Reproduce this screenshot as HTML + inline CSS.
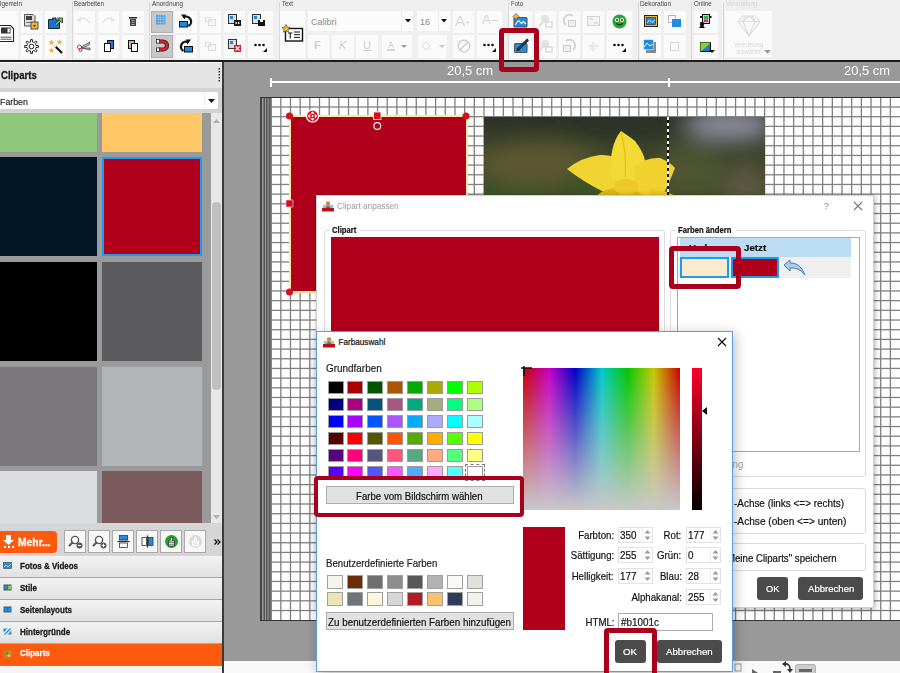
<!DOCTYPE html>
<html><head><meta charset="utf-8">
<style>
*{box-sizing:border-box;margin:0;padding:0}
html,body{width:900px;height:673px;overflow:hidden;background:#f0f0f0;font-family:"Liberation Sans",sans-serif;position:relative}
.a{position:absolute}
svg{position:absolute;overflow:visible}

.glbl{position:absolute;top:0px;font-size:8px;color:#444;line-height:10px;white-space:nowrap}
.sep{position:absolute;top:2px;width:1px;height:58px;background:#d9d9d9}
.btn{position:absolute;background:#fafafa}
.chk{background:#c8c8c8;border:1px solid #b0b0b0}
.t{position:absolute;white-space:nowrap;line-height:1}

</style></head><body>
<div class="a" style="left:0;top:0;width:900px;height:60px;background:#efefef"></div>
<div class="a" style="left:0;top:60px;width:900px;height:2px;background:#1c1c1c"></div>
<div class="a" style="left:0;top:62px;width:222px;height:611px;background:#e8e8e8"></div>
<div class="a" style="left:222px;top:62px;width:2px;height:611px;background:#3a3a3a"></div>
<div class="a" style="left:224px;top:62px;width:676px;height:599px;background:#999999"></div>
<div class="a" style="left:224px;top:661px;width:676px;height:12px;background:#f9f9f9"></div>
<div class="t" style="right:878.2px;transform-origin:100% 0;top:0.81px;font-size:6.6px;color:#444;font-weight:normal;transform:scaleX(0.950);">Allgemein</div>
<div class="t" style="left:74.4px;transform-origin:0 0;top:0.81px;font-size:6.6px;color:#444;font-weight:normal;transform:scaleX(0.940);">Bearbeiten</div>
<div class="t" style="left:151.8px;transform-origin:0 0;top:0.81px;font-size:6.6px;color:#444;font-weight:normal;transform:scaleX(0.960);">Anordnung</div>
<div class="t" style="left:281.6px;transform-origin:0 0;top:0.81px;font-size:6.6px;color:#444;font-weight:normal;transform:scaleX(0.909);">Text</div>
<div class="t" style="left:510.7px;transform-origin:0 0;top:0.81px;font-size:6.6px;color:#444;font-weight:normal;transform:scaleX(0.909);">Foto</div>
<div class="t" style="left:640px;transform-origin:0 0;top:0.81px;font-size:6.6px;color:#444;font-weight:normal;transform:scaleX(0.971);">Dekoration</div>
<div class="t" style="left:694px;transform-origin:0 0;top:0.81px;font-size:6.6px;color:#444;font-weight:normal;transform:scaleX(0.928);">Online</div>
<div class="t" style="left:726px;transform-origin:0 0;top:0.81px;font-size:6.6px;color:#d4d4d4;font-weight:normal;transform:scaleX(0.937);">Veredelung</div>
<div class="sep" style="left:72px"></div>
<div class="sep" style="left:149px"></div>
<div class="sep" style="left:279px"></div>
<div class="sep" style="left:508px"></div>
<div class="sep" style="left:638px"></div>
<div class="sep" style="left:691px"></div>
<div class="sep" style="left:723px"></div>
<div class="btn" style="position:absolute;left:0px;top:11px;width:18px;height:47px"></div>
<div class="btn" style="position:absolute;left:21px;top:11px;width:21px;height:22px"></div>
<div class="btn" style="position:absolute;left:45px;top:11px;width:21px;height:22px"></div>
<div class="btn" style="position:absolute;left:21px;top:35px;width:21px;height:23px"></div>
<div class="btn" style="position:absolute;left:45px;top:35px;width:21px;height:23px"></div>
<svg style="left:0px;top:24px" width="15" height="19" viewBox="0 0 15 19"><path d="M-3 1.5H10.5L13.5 4.5V17.5H-3Z" fill="#fff" stroke="#222" stroke-width="1.1"/><rect x="1" y="3.5" width="9.5" height="6" fill="#333"/><rect x="7.5" y="4.5" width="2.2" height="4" fill="#fff"/><rect x="0.5" y="12.5" width="11" height="1.4" fill="#888"/><rect x="0.5" y="14.6" width="11" height="1.4" fill="#888"/></svg>
<svg style="left:24px;top:14px" width="16" height="16" viewBox="0 0 16 16"><path d="M0.5 0.5H9L11 2.5V12H0.5Z" fill="#ddd" stroke="#555"/><rect x="2" y="2" width="6" height="4" fill="#444"/><rect x="2" y="8" width="7" height="1" fill="#777"/><rect x="7" y="8" width="7" height="7" fill="#f3b43b" stroke="#333" stroke-width=".8"/><path d="M9 11h3l-1.5 2z" fill="#333"/></svg>
<svg style="left:47px;top:16px" width="16" height="14" viewBox="0 0 16 14"><path d="M1.5 3.5H5.5V2H9V4H12.5V12.5H1.5Z" fill="#1f6fc9" stroke="#0d2a4a" stroke-width="1"/><path d="M9 8.5L14 3.5" stroke="#0d2a4a" stroke-width="3"/><path d="M9 8.5L14 3.5" stroke="#8bd12b" stroke-width="1.6"/><path d="M10.5 2H15.5V7Z" fill="#8bd12b" stroke="#0d2a4a" stroke-width=".8"/></svg>
<svg style="left:24px;top:39px" width="15" height="15" viewBox="0 0 15 15"><path d="M11.99 6.50 L14.45 6.66 L14.45 8.34 L11.99 8.50 L11.75 9.26 L11.38 9.96 L13.01 11.82 L11.82 13.01 L9.96 11.38 L9.26 11.75 L8.50 11.99 L8.34 14.45 L6.66 14.45 L6.50 11.99 L5.74 11.75 L5.04 11.38 L3.18 13.01 L1.99 11.82 L3.62 9.96 L3.25 9.26 L3.01 8.50 L0.55 8.34 L0.55 6.66 L3.01 6.50 L3.25 5.74 L3.62 5.04 L1.99 3.18 L3.18 1.99 L5.04 3.62 L5.74 3.25 L6.50 3.01 L6.66 0.55 L8.34 0.55 L8.50 3.01 L9.26 3.25 L9.96 3.62 L11.82 1.99 L13.01 3.18 L11.38 5.04 L11.75 5.74Z" fill="#fff" stroke="#222" stroke-width="1" stroke-linejoin="round"/><circle cx="7.5" cy="7.5" r="2.3" fill="#fff" stroke="#222" stroke-width="1"/></svg>
<svg style="left:48px;top:39px" width="16" height="16" viewBox="0 0 16 16"><path d="M3.50 0.50 L4.29 2.41 L6.35 2.57 L4.78 3.92 L5.26 5.93 L3.50 4.85 L1.74 5.93 L2.22 3.92 L0.65 2.57 L2.71 2.41Z" fill="#f0b41c"/><path d="M11.50 0.00 L12.29 1.91 L14.35 2.07 L12.78 3.42 L13.26 5.43 L11.50 4.35 L9.74 5.43 L10.22 3.42 L8.65 2.07 L10.71 1.91Z" fill="#f0b41c"/><path d="M3.50 8.50 L4.29 10.41 L6.35 10.57 L4.78 11.92 L5.26 13.93 L3.50 12.85 L1.74 13.93 L2.22 11.92 L0.65 10.57 L2.71 10.41Z" fill="#f0b41c"/><path d="M7 7L14 14" stroke="#111" stroke-width="2.2"/><path d="M6.5 6.5L8 8" stroke="#fff" stroke-width="1.2"/></svg>
<div class="btn" style="position:absolute;left:74px;top:11px;width:21px;height:22px"></div>
<div class="btn" style="position:absolute;left:74px;top:35px;width:21px;height:23px"></div>
<div class="btn" style="position:absolute;left:98px;top:11px;width:21px;height:22px"></div>
<div class="btn" style="position:absolute;left:98px;top:35px;width:21px;height:23px"></div>
<div class="btn" style="position:absolute;left:122px;top:11px;width:22px;height:22px"></div>
<div class="btn" style="position:absolute;left:122px;top:35px;width:22px;height:23px"></div>
<svg style="left:77px;top:16px" width="14" height="9" viewBox="0 0 14 9"><path d="M1 4Q7 -1 13 7" stroke="#e4e4e4" stroke-width="1.5" fill="none"/><path d="M0 4L4 1V7Z" fill="#e4e4e4"/></svg>
<svg style="left:101px;top:16px" width="14" height="9" viewBox="0 0 14 9"><path d="M13 4Q7 -1 1 7" stroke="#e4e4e4" stroke-width="1.5" fill="none"/><path d="M14 4L10 1V7Z" fill="#e4e4e4"/></svg>
<svg style="left:129px;top:16px" width="8" height="10" viewBox="0 0 8 10"><rect x="0" y="1" width="8" height="1.5" fill="#222"/><rect x="1" y="3" width="6" height="7" fill="#444"/><rect x="2.5" y="4" width="3" height="1" fill="#aaa"/><rect x="2.5" y="6" width="3" height="1" fill="#aaa"/><rect x="2.5" y="8" width="3" height="1" fill="#aaa"/></svg>
<svg style="left:77px;top:41px" width="14" height="10" viewBox="0 0 14 10"><circle cx="2.5" cy="6" r="2" fill="none" stroke="#d9262c" stroke-width="1"/><circle cx="3.5" cy="9" r="1.5" fill="none" stroke="#d9262c"/><path d="M4 6L13 1L12 4L5 7ZM5 7L13 9L13 7Z" fill="#ccc" stroke="#333" stroke-width=".7"/></svg>
<svg style="left:104px;top:40px" width="10" height="12" viewBox="0 0 10 12"><rect x="3.5" y="0.5" width="6" height="8" fill="#1e7ad6" stroke="#111"/><rect x="0.5" y="3.5" width="6" height="8" fill="#fff" stroke="#111"/></svg>
<svg style="left:128px;top:40px" width="10" height="12" viewBox="0 0 10 12"><rect x="0.5" y="0.5" width="6" height="8" fill="#c8b49a" stroke="#111"/><rect x="3.5" y="3.5" width="6" height="8" fill="#fff" stroke="#111"/></svg>
<div class="btn chk" style="position:absolute;left:151px;top:11px;width:22px;height:22px"></div>
<div class="btn chk" style="position:absolute;left:151px;top:35px;width:22px;height:23px"></div>
<div class="btn" style="position:absolute;left:175px;top:11px;width:22px;height:22px"></div>
<div class="btn" style="position:absolute;left:175px;top:35px;width:22px;height:23px"></div>
<div class="btn" style="position:absolute;left:200px;top:11px;width:21px;height:22px"></div>
<div class="btn" style="position:absolute;left:200px;top:35px;width:21px;height:23px"></div>
<div class="btn" style="position:absolute;left:224px;top:11px;width:21px;height:22px"></div>
<div class="btn" style="position:absolute;left:224px;top:35px;width:21px;height:23px"></div>
<div class="btn" style="position:absolute;left:248px;top:11px;width:25px;height:22px"></div>
<div class="btn" style="position:absolute;left:248px;top:35px;width:25px;height:23px"></div>
<svg style="left:156px;top:15px" width="10" height="10" viewBox="0 0 10 10"><rect x="0.0" y="0.0" width="2" height="2" fill="#3fa3e6"/><rect x="0.0" y="2.5" width="2" height="2" fill="#3fa3e6"/><rect x="0.0" y="5.0" width="2" height="2" fill="#3fa3e6"/><rect x="0.0" y="7.5" width="2" height="2" fill="#3fa3e6"/><rect x="2.5" y="0.0" width="2" height="2" fill="#3fa3e6"/><rect x="2.5" y="2.5" width="2" height="2" fill="#3fa3e6"/><rect x="2.5" y="5.0" width="2" height="2" fill="#3fa3e6"/><rect x="2.5" y="7.5" width="2" height="2" fill="#3fa3e6"/><rect x="5.0" y="0.0" width="2" height="2" fill="#3fa3e6"/><rect x="5.0" y="2.5" width="2" height="2" fill="#3fa3e6"/><rect x="5.0" y="5.0" width="2" height="2" fill="#3fa3e6"/><rect x="5.0" y="7.5" width="2" height="2" fill="#3fa3e6"/><rect x="7.5" y="0.0" width="2" height="2" fill="#3fa3e6"/><rect x="7.5" y="2.5" width="2" height="2" fill="#3fa3e6"/><rect x="7.5" y="5.0" width="2" height="2" fill="#3fa3e6"/><rect x="7.5" y="7.5" width="2" height="2" fill="#3fa3e6"/></svg>
<svg style="left:156px;top:39px" width="12" height="13" viewBox="0 0 12 13"><path d="M3 2.5H7A4 4 0 0 1 7 10.5H3" stroke="#222" stroke-width="4.2" fill="none"/><path d="M3 2.5H7A4 4 0 0 1 7 10.5H3" stroke="#d8222a" stroke-width="2.6" fill="none"/><rect x="0.5" y="0.5" width="3" height="3.6" fill="#fff" stroke="#222" stroke-width=".8"/><rect x="0.5" y="8.9" width="3" height="3.6" fill="#fff" stroke="#222" stroke-width=".8"/></svg>
<svg style="left:178px;top:13px" width="16" height="15" viewBox="0 0 16 15"><path d="M5.5 4.2A5 5 0 1 1 10.5 13" stroke="#111" stroke-width="2.2" fill="none"/><path d="M3 1.5L8 1.5L6.5 6.5Z" fill="#111"/><rect x="1.5" y="8.5" width="8" height="5.5" fill="#1a8be0" stroke="#111" stroke-width="1"/></svg>
<svg style="left:178px;top:38px" width="16" height="15" viewBox="0 0 16 15"><path d="M10.5 4.2A5 5 0 1 0 5.5 13" stroke="#111" stroke-width="2.2" fill="none"/><path d="M13 1.5L8 1.5L9.5 6.5Z" fill="#111"/><rect x="6.5" y="8.5" width="8" height="5.5" fill="#1a8be0" stroke="#111" stroke-width="1"/></svg>
<svg style="left:204px;top:16px" width="12" height="10" viewBox="0 0 12 10"><rect x="4.5" y="3.5" width="7" height="6" fill="#f4f4f4" stroke="#ddd"/><rect x="1.5" y="1.5" width="5" height="4" fill="none" stroke="#ddd"/></svg>
<svg style="left:204px;top:41px" width="12" height="10" viewBox="0 0 12 10"><rect x="4.5" y="3.5" width="7" height="6" fill="#f4f4f4" stroke="#ddd"/><rect x="1.5" y="1.5" width="5" height="4" fill="none" stroke="#ddd"/></svg>
<svg style="left:228px;top:14px" width="14" height="13" viewBox="0 0 14 13"><rect x="0.5" y="0.5" width="8" height="9" fill="#ddd" stroke="#333"/><rect x="2" y="2" width="3" height="3" fill="#1a8be0"/><rect x="6" y="6" width="7" height="6" fill="#111"/><path d="M7.5 7.5l2 1.5-2 1.5zM10 7.5l2 1.5-2 1.5z" fill="#fff"/></svg>
<svg style="left:252px;top:14px" width="14" height="13" viewBox="0 0 14 13"><rect x="0.5" y="0.5" width="8" height="9" fill="#ddd" stroke="#333"/><rect x="2" y="2" width="3" height="3" fill="#1a8be0"/><rect x="6" y="6" width="7" height="6" fill="#111"/><rect x="8" y="5" width="3" height="3" fill="#fff"/></svg>
<svg style="left:228px;top:39px" width="14" height="13" viewBox="0 0 14 13"><rect x="0.5" y="0.5" width="8" height="9" fill="#ddd" stroke="#333"/><rect x="2" y="2" width="3" height="3" fill="#1a8be0"/><rect x="6" y="6" width="7" height="7" fill="#d3212a"/><path d="M7.5 7.5L11.5 11.5M11.5 7.5L7.5 11.5" stroke="#fff" stroke-width="1.2"/></svg>
<svg style="left:254px;top:43px" width="14" height="9" viewBox="0 0 14 9"><circle cx="1.5" cy="2" r="1.3" fill="#111"/><circle cx="5.5" cy="2" r="1.3" fill="#111"/><circle cx="9.5" cy="2" r="1.3" fill="#111"/><path d="M13 5V9H9Z" fill="#111"/></svg>
<div class="btn" style="position:absolute;left:280px;top:11px;width:25px;height:47px"></div>
<svg style="left:282px;top:24px" width="22" height="18" viewBox="0 0 22 18"><rect x="3.5" y="4.5" width="17" height="12.5" fill="#fff" stroke="#111" stroke-width="1.4"/><path d="M6 9H10.5M8.2 9V14.5" stroke="#111" stroke-width="1.1"/><path d="M12 8H18M12 10.7H18M12 13.4H18" stroke="#111" stroke-width="1"/><path d="M4 0.5l1.2 2.6 2.8.4-2 1.9.5 2.8-2.5-1.3-2.5 1.3.5-2.8-2-1.9 2.8-.4z" fill="#f6c21d" stroke="#333" stroke-width=".6"/></svg>
<div class="btn" style="left:308px;top:11px;width:105px;height:20px;background:#fbfbfb"><div class="t" style="left:3px;top:7px;font-size:9px;color:#8a8a8a">Calibri</div><div class="a" style="left:93px;top:0;width:1px;height:20px;background:#eee"></div><svg style="left:97px;top:8px" width="6" height="4"><path d="M0 0H6L3 3.5Z" fill="#111"/></svg></div>
<div class="btn" style="left:417px;top:11px;width:33px;height:20px;background:#fbfbfb"><div class="t" style="left:3px;top:7px;font-size:9px;color:#8a8a8a">16</div><div class="a" style="left:21px;top:0;width:1px;height:20px;background:#eee"></div><svg style="left:24px;top:8px" width="6" height="4"><path d="M0 0H6L3 3.5Z" fill="#111"/></svg></div>
<div class="btn" style="position:absolute;left:453px;top:11px;width:21px;height:22px"></div>
<div class="btn" style="position:absolute;left:477px;top:11px;width:25px;height:22px"></div>
<div class="t" style="left:455px;top:13px;font-size:15px;color:#d6d6d6">A<span style="font-size:9px">+</span></div>
<div class="t" style="left:482px;top:13px;font-size:13px;color:#d6d6d6">A–</div>
<div class="btn" style="position:absolute;left:308px;top:35px;width:21px;height:23px"></div>
<div class="btn" style="position:absolute;left:332px;top:35px;width:22px;height:23px"></div>
<div class="btn" style="position:absolute;left:356px;top:35px;width:22px;height:23px"></div>
<div class="btn" style="position:absolute;left:382px;top:35px;width:30px;height:23px"></div>
<div class="btn" style="position:absolute;left:418px;top:35px;width:29px;height:23px"></div>
<div class="btn" style="position:absolute;left:453px;top:35px;width:21px;height:23px"></div>
<div class="btn" style="position:absolute;left:477px;top:35px;width:25px;height:23px"></div>
<div class="t" style="left:314px;top:40px;font-size:11px;font-weight:bold;color:#d0d0d0">F</div>
<div class="t" style="left:339px;top:40px;font-size:11px;font-style:italic;color:#d0d0d0">K</div>
<div class="t" style="left:363px;top:40px;font-size:11px;color:#d0d0d0;text-decoration:underline">U</div>
<svg style="left:387px;top:41px" width="20" height="11" viewBox="0 0 20 11"><path d="M1.5 7L4 0.5L6.5 7M2.5 4.5H5.5" stroke="#d6d6d6" fill="none"/><rect x="0" y="8" width="8" height="2" fill="#d6d6d6"/><path d="M14 4H20L17 7Z" fill="#9a9a9a"/></svg>
<svg style="left:421px;top:41px" width="24" height="11" viewBox="0 0 24 11"><path d="M1 5L5 1L9 5L5 9Z" fill="none" stroke="#d6d6d6"/><path d="M18 4H24L21 7Z" fill="#c7c7c7"/></svg>
<svg style="left:457px;top:39px" width="14" height="14" viewBox="0 0 14 14"><circle cx="7" cy="7" r="5.8" fill="none" stroke="#c9c9c9" stroke-width="1.2"/><path d="M3 11L11 3" stroke="#c9c9c9" stroke-width="1.2"/></svg>
<svg style="left:483px;top:43px" width="14" height="9" viewBox="0 0 14 9"><circle cx="1.5" cy="2" r="1.3" fill="#111"/><circle cx="5.5" cy="2" r="1.3" fill="#111"/><circle cx="9.5" cy="2" r="1.3" fill="#111"/><path d="M13 5V9H9Z" fill="#111"/></svg>
<div class="btn" style="position:absolute;left:509px;top:11px;width:23px;height:22px"></div>
<div class="btn" style="position:absolute;left:509px;top:35px;width:23px;height:23px"></div>
<div class="btn" style="position:absolute;left:535px;top:11px;width:21px;height:22px"></div>
<div class="btn" style="position:absolute;left:535px;top:35px;width:21px;height:23px"></div>
<div class="btn" style="position:absolute;left:559px;top:11px;width:21px;height:22px"></div>
<div class="btn" style="position:absolute;left:559px;top:35px;width:21px;height:23px"></div>
<div class="btn" style="position:absolute;left:583px;top:11px;width:21px;height:22px"></div>
<div class="btn" style="position:absolute;left:583px;top:35px;width:21px;height:23px"></div>
<div class="btn" style="position:absolute;left:607px;top:11px;width:25px;height:22px"></div>
<div class="btn" style="position:absolute;left:607px;top:35px;width:25px;height:23px"></div>
<svg style="left:512px;top:13px" width="17" height="15" viewBox="0 0 17 15"><rect x="2" y="4.5" width="13" height="9.5" rx="1" fill="#1e8de3" stroke="#555" stroke-width="1.1"/><path d="M3 12L6.5 7.5L9.5 10.5L11.5 8.5L14 11" stroke="#fff" stroke-width="1.1" fill="none"/><path d="M4 0.5L7 3.5L4 6.5L1 3.5Z" fill="#f3b43b" stroke="#333" stroke-width=".6"/></svg>
<svg style="left:513px;top:37px" width="17" height="17" viewBox="0 0 17 17"><rect x="1.5" y="6.5" width="12.5" height="9" rx="1" fill="#1e8de3" stroke="#555" stroke-width="1.1"/><path d="M4.5 13L15 2.5" stroke="#111" stroke-width="2.6"/><path d="M4.8 12.7L14.7 2.8" stroke="#777" stroke-width=".8"/><path d="M3.5 14L4.5 11.5L6 13Z" fill="#111"/></svg>
<svg style="left:539px;top:14px" width="14" height="14" viewBox="0 0 14 14"><circle cx="6" cy="5" r="4" fill="#e2e2e2"/><path d="M0 12L4 8" stroke="#ddd" stroke-width="2"/><rect x="7" y="8" width="6" height="5" fill="#fff" stroke="#ccc"/></svg>
<svg style="left:539px;top:39px" width="14" height="14" viewBox="0 0 14 14"><circle cx="6" cy="5" r="4" fill="#e2e2e2"/><path d="M0 12L4 8" stroke="#ddd" stroke-width="2"/><rect x="7" y="8" width="6" height="5" fill="#fff" stroke="#ccc"/></svg>
<svg style="left:563px;top:14px" width="13" height="13" viewBox="0 0 13 13"><path d="M10 2A5 5 0 1 0 3 11" stroke="#d4d4d4" stroke-width="2" fill="none"/><rect x="5.5" y="6.5" width="7" height="6" fill="#eee" stroke="#ccc"/></svg>
<svg style="left:563px;top:39px" width="13" height="13" viewBox="0 0 13 13"><path d="M3 2A5 5 0 1 1 10 11" stroke="#d4d4d4" stroke-width="2" fill="none"/><rect x="0.5" y="6.5" width="7" height="6" fill="#eee" stroke="#ccc"/></svg>
<svg style="left:587px;top:16px" width="13" height="10" viewBox="0 0 13 10"><rect x="0.5" y="0.5" width="12" height="9" fill="#f2f2f2" stroke="#d4d4d4"/><path d="M2 3H6M7 7H11" stroke="#ccc"/></svg>
<svg style="left:587px;top:40px" width="13" height="13" viewBox="0 0 13 13"><path d="M1 6L12 6M6 1V12" stroke="#e0e0e0"/><circle cx="6.5" cy="6.5" r="3" fill="none" stroke="#e6e6e6"/></svg>
<svg style="left:612px;top:14px" width="15" height="15" viewBox="0 0 15 15"><circle cx="7.5" cy="7.5" r="7" fill="#2aa52f"/><circle cx="5" cy="6" r="2" fill="#fff"/><circle cx="10" cy="6" r="2" fill="#fff"/><circle cx="5" cy="6" r=".9" fill="#111"/><circle cx="10" cy="6" r=".9" fill="#111"/><path d="M4 9.5Q7.5 12.5 11 9.5" stroke="#111" fill="none"/></svg>
<svg style="left:613px;top:43px" width="14" height="9" viewBox="0 0 14 9"><circle cx="1.5" cy="2" r="1.3" fill="#111"/><circle cx="5.5" cy="2" r="1.3" fill="#111"/><circle cx="9.5" cy="2" r="1.3" fill="#111"/><path d="M13 5V9H9Z" fill="#111"/></svg>
<div class="btn" style="position:absolute;left:640px;top:11px;width:21px;height:22px"></div>
<div class="btn" style="position:absolute;left:664px;top:11px;width:22px;height:22px"></div>
<div class="btn" style="position:absolute;left:640px;top:35px;width:21px;height:23px"></div>
<div class="btn" style="position:absolute;left:664px;top:35px;width:22px;height:23px"></div>
<svg style="left:644px;top:15px" width="14" height="12" viewBox="0 0 14 12"><rect x="0.5" y="0.5" width="13" height="11" fill="#f3b43b" stroke="#222"/><rect x="2.5" y="2.5" width="9" height="7" fill="#1e8de3" stroke="#222" stroke-width=".6"/><path d="M3 8L5.5 5L8 7.5L11 5" stroke="#fff" fill="none" stroke-width=".8"/></svg>
<svg style="left:668px;top:15px" width="13" height="12" viewBox="0 0 13 12"><rect x="0.5" y="0.5" width="7" height="7" fill="#fff" stroke="#bbb"/><rect x="4" y="4" width="9" height="8" fill="#1e8de3"/></svg>
<svg style="left:643px;top:39px" width="13" height="14" viewBox="0 0 13 14"><rect x="3" y="3" width="10" height="11" fill="#888"/><rect x="0.5" y="0.5" width="10" height="10" fill="#1e8de3" stroke="#fff" stroke-width=".5"/><path d="M1 8L4 4L7 7L10 5" stroke="#fff" fill="none"/></svg>
<svg style="left:669px;top:41px" width="11" height="11" viewBox="0 0 11 11"><rect x="1.5" y="1.5" width="8" height="8" fill="none" stroke="#d6d6d6"/></svg>
<div class="btn" style="position:absolute;left:694px;top:11px;width:24px;height:22px"></div>
<div class="btn" style="position:absolute;left:694px;top:35px;width:24px;height:23px"></div>
<svg style="left:699px;top:14px" width="13" height="15" viewBox="0 0 13 15"><rect x="3.5" y="0.5" width="7" height="9" fill="#ccc" stroke="#111"/><rect x="5" y="2" width="4" height="3" fill="#2bb24c"/><rect x="5" y="5.5" width="4" height="2.5" fill="#e81e8c"/><circle cx="3" cy="10" r="2.2" fill="#111"/><path d="M0 14H6L3 10Z" fill="#111"/><rect x="1" y="2" width="2" height="2" fill="#111"/><rect x="10.5" y="2" width="2" height="2" fill="#111"/></svg>
<svg style="left:700px;top:42px" width="15" height="12" viewBox="0 0 15 12"><rect x="0.5" y="0.5" width="10" height="9" fill="#1e7ad6" stroke="#111"/><path d="M1 9.5L10.5 1V0.5H0.5V9.5Z" fill="#8bd12b"/><path d="M9 8H15L12 11Z" fill="#111"/></svg>
<div class="btn" style="position:absolute;left:725px;top:11px;width:47px;height:46px"></div>
<svg style="left:737px;top:15px" width="24" height="22" viewBox="0 0 24 22"><path d="M6 1H18L23 6.5L12 21L1 6.5Z M1 6.5H23 M8.5 1L6 6.5L12 21L18 6.5L15.5 1 M6 6.5L12 1L18 6.5" fill="none" stroke="#dcdcdc" stroke-width="1.1" stroke-linejoin="round"/></svg>
<div class="t" style="left:733.8px;transform-origin:0 0;top:42.31px;font-size:6.6px;color:#d6d6d6;font-weight:normal;transform:scaleX(0.868);">Veredelung</div>
<div class="t" style="left:735.7px;transform-origin:0 0;top:48.71px;font-size:6.6px;color:#d6d6d6;font-weight:normal;transform:scaleX(0.830);">auswählen</div>
<svg style="left:764px;top:50px" width="7" height="4" viewBox="0 0 7 4"><path d="M0 0H7L3.5 3.8Z" fill="#9a9a9a"/></svg>
<div class="a" style="left:0;top:62px;width:222px;height:26px;background:#e4e4e4;border-top:1px solid #fafafa"></div>
<div class="t" style="left:0.5px;transform-origin:0 0;top:70.67px;font-size:10.2px;color:#1a1a1a;font-weight:bold;transform:scaleX(0.943);-webkit-text-stroke:.3px #1a1a1a;">Cliparts</div>
<svg style="left:218px;top:68px" width="3" height="16"><rect x="0.5" y="0" width="1.5" height="1.5" fill="#333"/><rect x="0.5" y="3" width="1.5" height="1.5" fill="#333"/><rect x="0.5" y="6" width="1.5" height="1.5" fill="#333"/><rect x="0.5" y="9" width="1.5" height="1.5" fill="#333"/><rect x="0.5" y="12" width="1.5" height="1.5" fill="#333"/></svg>
<div class="a" style="left:0;top:88px;width:222px;height:25px;background:#d3d3d3"></div>
<div class="a" style="left:0;top:92px;width:218px;height:17px;background:#fff;border-radius:0 2px 2px 0"></div>
<div class="a" style="left:204px;top:92px;width:1px;height:17px;background:#f0f0f0"></div>
<div class="t" style="left:0px;transform-origin:0 0;top:96.74px;font-size:9.4px;color:#1a1a1a;font-weight:normal;transform:scaleX(0.940);-webkit-text-stroke:.15px #1a1a1a;">Farben</div>
<svg style="left:208px;top:99px" width="7" height="4"><path d="M0 0H7L3.5 4Z" fill="#111"/></svg>
<div class="a" style="left:0;top:113px;width:222px;height:410px;background:#9a9a9a"></div>
<div class="a" style="left:0px;top:113px;width:97px;height:39px;background:#8fc77b;"></div>
<div class="a" style="left:102px;top:113px;width:100px;height:39px;background:#fdc865;"></div>
<div class="a" style="left:0px;top:157px;width:97px;height:99px;background:#011627;"></div>
<div class="a" style="left:102px;top:157px;width:100px;height:99px;background:#b1001c;border:2px solid #1b9cf0;"></div>
<div class="a" style="left:0px;top:262px;width:97px;height:99px;background:#000000;"></div>
<div class="a" style="left:102px;top:262px;width:100px;height:99px;background:#5b5b5d;"></div>
<div class="a" style="left:0px;top:367px;width:97px;height:99px;background:#7a787c;"></div>
<div class="a" style="left:102px;top:367px;width:100px;height:99px;background:#b4b5b7;"></div>
<div class="a" style="left:0px;top:471px;width:97px;height:52px;background:#dcdddf;"></div>
<div class="a" style="left:102px;top:471px;width:100px;height:52px;background:#7a5a5c;"></div>
<div class="a" style="left:211px;top:113px;width:11px;height:410px;background:#e8e8e8"></div>
<div class="a" style="left:212px;top:202px;width:8.5px;height:188px;background:#c0c0c0;border-radius:4px"></div>
<svg style="left:213px;top:119px" width="7" height="4"><path d="M0 4H7L3.5 0Z" fill="#b0b0b0"/></svg>
<svg style="left:213px;top:515px" width="7" height="4"><path d="M0 0H7L3.5 4Z" fill="#b0b0b0"/></svg>
<div class="a" style="left:0;top:523px;width:222px;height:33px;background:#d5d5d5"></div>
<div class="a" style="left:0;top:531px;width:57px;height:22px;background:#fd5a0f;border-radius:0 4px 4px 0"></div>
<svg style="left:3px;top:535px" width="12" height="14"><path d="M3 0H8V5H11L5.5 10L0 5H3Z" fill="#fff"/><rect x="1" y="11" width="2" height="2" fill="#fff"/><rect x="5" y="11" width="2" height="2" fill="#fff"/><rect x="9" y="11" width="2" height="2" fill="#fff"/></svg>
<div class="t" style="left:17.7px;transform-origin:0 0;top:537.74px;font-size:10px;color:#fff;font-weight:bold;transform:scaleX(1.032);-webkit-text-stroke:.3px #fff;">Mehr...</div>
<div class="a" style="left:64px;top:530px;width:22px;height:23px;background:#f7f7f7;border:1px solid #a9a9a9"></div>
<div class="a" style="left:88px;top:530px;width:22px;height:23px;background:#f7f7f7;border:1px solid #a9a9a9"></div>
<div class="a" style="left:112px;top:530px;width:22px;height:23px;background:#f7f7f7;border:1px solid #a9a9a9"></div>
<div class="a" style="left:136px;top:530px;width:22px;height:23px;background:#f7f7f7;border:1px solid #a9a9a9"></div>
<div class="a" style="left:160px;top:530px;width:22px;height:23px;background:#f7f7f7;border:1px solid #a9a9a9"></div>
<div class="a" style="left:184px;top:530px;width:22px;height:23px;background:#f7f7f7;border:1px solid #a9a9a9"></div>
<svg style="left:69px;top:535px" width="13" height="13"><circle cx="6" cy="5" r="3.6" fill="#fff" stroke="#555" stroke-width="1.4"/><path d="M3.5 7.5L0.5 10.5" stroke="#555" stroke-width="2" stroke-linecap="round"/><circle cx="10.5" cy="10.5" r="3" fill="#555"/><path d="M8.8 10.5H12.2" stroke="#fff" stroke-width="1.1"/></svg>
<svg style="left:93px;top:535px" width="13" height="13"><circle cx="6" cy="5" r="3.6" fill="#fff" stroke="#555" stroke-width="1.4"/><path d="M3.5 7.5L0.5 10.5" stroke="#555" stroke-width="2" stroke-linecap="round"/><circle cx="10.5" cy="10.5" r="3" fill="#555"/><path d="M8.8 10.5H12.2M10.5 8.8V12.2" stroke="#fff" stroke-width="1.1"/></svg>
<svg style="left:117px;top:535px" width="13" height="13"><rect x="2.5" y="0.5" width="8" height="4.5" fill="#1e8de3" stroke="#333" stroke-width=".8"/><path d="M0.5 6.5H12.5" stroke="#333" stroke-width="1.3"/><rect x="2.5" y="8" width="8" height="4.5" fill="#fff" stroke="#333" stroke-width=".8"/></svg>
<svg style="left:141px;top:535px" width="13" height="13"><rect x="1" y="2.5" width="4.5" height="8" fill="#fff" stroke="#333" stroke-width=".8"/><path d="M6.5 0.5V12.5" stroke="#333" stroke-width="1.3"/><rect x="7.5" y="2.5" width="4.5" height="8" fill="#1e8de3" stroke="#333" stroke-width=".8"/></svg>
<svg style="left:165px;top:535px" width="13" height="13"><circle cx="6.5" cy="6.5" r="6.5" fill="#1fa12c"/><path d="M3.5 6H9.5V11H3.5Z" fill="#fff" stroke="#333" stroke-width=".8"/><path d="M5 6L6 2.2Q7.5 2 7.5 4V6" fill="#fff" stroke="#333" stroke-width=".8"/><path d="M9.5 7.6H4M9.5 9.3H4" stroke="#333" stroke-width=".6"/></svg>
<svg style="left:189px;top:535px" width="13" height="13"><circle cx="6.5" cy="6.5" r="6.5" fill="#dadada"/><path d="M3.5 6H9.5V11H3.5Z" fill="#eee" stroke="#fff" stroke-width=".8"/><path d="M5 6L6 2.2Q7.5 2 7.5 4V6" fill="#eee" stroke="#fff" stroke-width=".8"/></svg>
<svg style="left:214px;top:539px" width="7" height="6"><path d="M0.5 0.5L3 3L0.5 5.5M3.5 0.5L6 3L3.5 5.5" stroke="#111" stroke-width="1.3" fill="none"/></svg>
<div class="a" style="left:0;top:556px;width:222px;height:22px;background:linear-gradient(#f2f2f2,#e1e1e1);border-bottom:1px solid #a6a6a6"></div>
<div class="t" style="left:20px;transform-origin:0 0;top:561.83px;font-size:9.3px;color:#1a1a1a;font-weight:bold;transform:scaleX(0.860);-webkit-text-stroke:.3px #1a1a1a;">Fotos &amp; Videos</div>
<div class="a" style="left:0;top:578px;width:222px;height:22px;background:linear-gradient(#f2f2f2,#e1e1e1);border-bottom:1px solid #a6a6a6"></div>
<div class="t" style="left:20px;transform-origin:0 0;top:583.83px;font-size:9.3px;color:#1a1a1a;font-weight:bold;transform:scaleX(0.860);-webkit-text-stroke:.3px #1a1a1a;">Stile</div>
<div class="a" style="left:0;top:600px;width:222px;height:22px;background:linear-gradient(#f2f2f2,#e1e1e1);border-bottom:1px solid #a6a6a6"></div>
<div class="t" style="left:20px;transform-origin:0 0;top:605.83px;font-size:9.3px;color:#1a1a1a;font-weight:bold;transform:scaleX(0.860);-webkit-text-stroke:.3px #1a1a1a;">Seitenlayouts</div>
<div class="a" style="left:0;top:622px;width:222px;height:22px;background:linear-gradient(#f2f2f2,#e1e1e1);border-bottom:1px solid #a6a6a6"></div>
<div class="t" style="left:20px;transform-origin:0 0;top:627.83px;font-size:9.3px;color:#1a1a1a;font-weight:bold;transform:scaleX(0.860);-webkit-text-stroke:.3px #1a1a1a;">Hintergründe</div>
<div class="a" style="left:0;top:644px;width:222px;height:22px;background:#fd5a0f"></div>
<div class="t" style="left:20px;transform-origin:0 0;top:648.63px;font-size:9.3px;color:#fff;font-weight:bold;transform:scaleX(0.860);-webkit-text-stroke:.25px #fff;">Cliparts</div>
<div class="a" style="left:0;top:666px;width:222px;height:7px;background:#f4f4f4"></div>
<svg style="left:3px;top:562px" width="9" height="7"><rect x=".5" y=".5" width="8" height="6" fill="#1e8de3" stroke="#444" stroke-width=".6"/><path d="M1 5L3 3L5 5L8 2" stroke="#fff" stroke-width=".6" fill="none"/></svg>
<svg style="left:3px;top:584px" width="9" height="7"><rect x=".5" y=".5" width="8" height="6" fill="#555"/><rect x="1.5" y="1.5" width="3" height="4" fill="#1e8de3"/><rect x="5" y="1.5" width="3" height="4" fill="#7ec850"/></svg>
<svg style="left:3px;top:606px" width="9" height="7"><rect x=".5" y=".5" width="8" height="6" fill="#555"/><rect x="1.5" y="1.5" width="3" height="4" fill="#1e8de3"/><rect x="5" y="1.5" width="3" height="4" fill="#1e8de3"/></svg>
<svg style="left:3px;top:628px" width="9" height="7"><rect x=".5" y=".5" width="8" height="6" fill="#1e8de3"/><path d="M0 6L6 0M3 7L9 1" stroke="#fff" stroke-width="1.2"/></svg>
<svg style="left:3px;top:649px" width="10" height="10"><circle cx="5" cy="5" r="4" fill="#b58d2a"/><circle cx="4" cy="4" r="1.5" fill="#6a8d2b"/><circle cx="6" cy="6.5" r="1.5" fill="#e9c25a"/></svg>
<div class="a" style="left:271px;top:81px;width:629px;height:2px;background:#fff"></div>
<div class="a" style="left:270px;top:78px;width:2px;height:9px;background:#fff"></div>
<div class="a" style="left:668px;top:78px;width:2px;height:9px;background:#fff"></div>
<div class="t" style="left:446.7px;transform-origin:0 0;top:63.70px;font-size:13px;color:#fff;font-weight:normal;transform:scaleX(0.995);">20,5 cm</div>
<div class="t" style="left:843.5px;transform-origin:0 0;top:63.70px;font-size:13px;color:#fff;font-weight:normal;transform:scaleX(0.995);">20,5 cm</div>
<div class="a" style="left:260px;top:97px;width:640px;height:524px;background:#fff;border:1px solid #333;border-right:none"></div>
<svg style="left:260px;top:98px" width="12" height="522"><rect width="12" height="522" fill="#9a9a9a"/><rect x="0" width="2" height="522" fill="#444"/><rect x="3.6" width="1.3" height="522" fill="#4a4a4a"/><rect x="6.2" width="1.3" height="522" fill="#4a4a4a"/><rect x="8.6" width="2.6" height="522" fill="#5a5a5a"/></svg>
<svg class="a" style="left:0;top:0" width="900" height="673"><rect x="270.47" y="98" width="1.3" height="522" fill="#808080"/><rect x="280.15" y="98" width="1.3" height="522" fill="#808080"/><rect x="289.82" y="98" width="1.3" height="522" fill="#808080"/><rect x="299.50" y="98" width="1.3" height="522" fill="#808080"/><rect x="309.17" y="98" width="1.3" height="522" fill="#808080"/><rect x="318.85" y="98" width="1.3" height="522" fill="#808080"/><rect x="328.53" y="98" width="1.3" height="522" fill="#808080"/><rect x="338.20" y="98" width="1.3" height="522" fill="#808080"/><rect x="347.88" y="98" width="1.3" height="522" fill="#808080"/><rect x="357.55" y="98" width="1.3" height="522" fill="#808080"/><rect x="367.23" y="98" width="1.3" height="522" fill="#808080"/><rect x="376.91" y="98" width="1.3" height="522" fill="#808080"/><rect x="386.58" y="98" width="1.3" height="522" fill="#808080"/><rect x="396.26" y="98" width="1.3" height="522" fill="#808080"/><rect x="405.93" y="98" width="1.3" height="522" fill="#808080"/><rect x="415.61" y="98" width="1.3" height="522" fill="#808080"/><rect x="425.29" y="98" width="1.3" height="522" fill="#808080"/><rect x="434.96" y="98" width="1.3" height="522" fill="#808080"/><rect x="444.64" y="98" width="1.3" height="522" fill="#808080"/><rect x="454.31" y="98" width="1.3" height="522" fill="#808080"/><rect x="463.99" y="98" width="1.3" height="522" fill="#808080"/><rect x="473.67" y="98" width="1.3" height="522" fill="#808080"/><rect x="483.34" y="98" width="1.3" height="522" fill="#808080"/><rect x="493.02" y="98" width="1.3" height="522" fill="#808080"/><rect x="502.69" y="98" width="1.3" height="522" fill="#808080"/><rect x="512.37" y="98" width="1.3" height="522" fill="#808080"/><rect x="522.05" y="98" width="1.3" height="522" fill="#808080"/><rect x="531.72" y="98" width="1.3" height="522" fill="#808080"/><rect x="541.40" y="98" width="1.3" height="522" fill="#808080"/><rect x="551.07" y="98" width="1.3" height="522" fill="#808080"/><rect x="560.75" y="98" width="1.3" height="522" fill="#808080"/><rect x="570.43" y="98" width="1.3" height="522" fill="#808080"/><rect x="580.10" y="98" width="1.3" height="522" fill="#808080"/><rect x="589.78" y="98" width="1.3" height="522" fill="#808080"/><rect x="599.45" y="98" width="1.3" height="522" fill="#808080"/><rect x="609.13" y="98" width="1.3" height="522" fill="#808080"/><rect x="618.81" y="98" width="1.3" height="522" fill="#808080"/><rect x="628.48" y="98" width="1.3" height="522" fill="#808080"/><rect x="638.16" y="98" width="1.3" height="522" fill="#808080"/><rect x="647.83" y="98" width="1.3" height="522" fill="#808080"/><rect x="657.51" y="98" width="1.3" height="522" fill="#808080"/><rect x="667.19" y="98" width="1.3" height="522" fill="#808080"/><rect x="676.86" y="98" width="1.3" height="522" fill="#808080"/><rect x="686.54" y="98" width="1.3" height="522" fill="#808080"/><rect x="696.21" y="98" width="1.3" height="522" fill="#808080"/><rect x="705.89" y="98" width="1.3" height="522" fill="#808080"/><rect x="715.57" y="98" width="1.3" height="522" fill="#808080"/><rect x="725.24" y="98" width="1.3" height="522" fill="#808080"/><rect x="734.92" y="98" width="1.3" height="522" fill="#808080"/><rect x="744.59" y="98" width="1.3" height="522" fill="#808080"/><rect x="754.27" y="98" width="1.3" height="522" fill="#808080"/><rect x="763.95" y="98" width="1.3" height="522" fill="#808080"/><rect x="773.62" y="98" width="1.3" height="522" fill="#808080"/><rect x="783.30" y="98" width="1.3" height="522" fill="#808080"/><rect x="792.97" y="98" width="1.3" height="522" fill="#808080"/><rect x="802.65" y="98" width="1.3" height="522" fill="#808080"/><rect x="812.33" y="98" width="1.3" height="522" fill="#808080"/><rect x="822.00" y="98" width="1.3" height="522" fill="#808080"/><rect x="831.68" y="98" width="1.3" height="522" fill="#808080"/><rect x="841.35" y="98" width="1.3" height="522" fill="#808080"/><rect x="851.03" y="98" width="1.3" height="522" fill="#808080"/><rect x="860.71" y="98" width="1.3" height="522" fill="#808080"/><rect x="870.38" y="98" width="1.3" height="522" fill="#808080"/><rect x="880.06" y="98" width="1.3" height="522" fill="#808080"/><rect x="889.73" y="98" width="1.3" height="522" fill="#808080"/><rect x="271" y="106.35" width="629" height="1.3" fill="#808080"/><rect x="271" y="116.03" width="629" height="1.3" fill="#808080"/><rect x="271" y="125.72" width="629" height="1.3" fill="#808080"/><rect x="271" y="135.40" width="629" height="1.3" fill="#808080"/><rect x="271" y="145.08" width="629" height="1.3" fill="#808080"/><rect x="271" y="154.76" width="629" height="1.3" fill="#808080"/><rect x="271" y="164.45" width="629" height="1.3" fill="#808080"/><rect x="271" y="174.13" width="629" height="1.3" fill="#808080"/><rect x="271" y="183.81" width="629" height="1.3" fill="#808080"/><rect x="271" y="193.50" width="629" height="1.3" fill="#808080"/><rect x="271" y="203.18" width="629" height="1.3" fill="#808080"/><rect x="271" y="212.86" width="629" height="1.3" fill="#808080"/><rect x="271" y="222.55" width="629" height="1.3" fill="#808080"/><rect x="271" y="232.23" width="629" height="1.3" fill="#808080"/><rect x="271" y="241.91" width="629" height="1.3" fill="#808080"/><rect x="271" y="251.59" width="629" height="1.3" fill="#808080"/><rect x="271" y="261.28" width="629" height="1.3" fill="#808080"/><rect x="271" y="270.96" width="629" height="1.3" fill="#808080"/><rect x="271" y="280.64" width="629" height="1.3" fill="#808080"/><rect x="271" y="290.33" width="629" height="1.3" fill="#808080"/><rect x="271" y="300.01" width="629" height="1.3" fill="#808080"/><rect x="271" y="309.69" width="629" height="1.3" fill="#808080"/><rect x="271" y="319.38" width="629" height="1.3" fill="#808080"/><rect x="271" y="329.06" width="629" height="1.3" fill="#808080"/><rect x="271" y="338.74" width="629" height="1.3" fill="#808080"/><rect x="271" y="348.43" width="629" height="1.3" fill="#808080"/><rect x="271" y="358.11" width="629" height="1.3" fill="#808080"/><rect x="271" y="367.79" width="629" height="1.3" fill="#808080"/><rect x="271" y="377.47" width="629" height="1.3" fill="#808080"/><rect x="271" y="387.16" width="629" height="1.3" fill="#808080"/><rect x="271" y="396.84" width="629" height="1.3" fill="#808080"/><rect x="271" y="406.52" width="629" height="1.3" fill="#808080"/><rect x="271" y="416.21" width="629" height="1.3" fill="#808080"/><rect x="271" y="425.89" width="629" height="1.3" fill="#808080"/><rect x="271" y="435.57" width="629" height="1.3" fill="#808080"/><rect x="271" y="445.25" width="629" height="1.3" fill="#808080"/><rect x="271" y="454.94" width="629" height="1.3" fill="#808080"/><rect x="271" y="464.62" width="629" height="1.3" fill="#808080"/><rect x="271" y="474.30" width="629" height="1.3" fill="#808080"/><rect x="271" y="483.99" width="629" height="1.3" fill="#808080"/><rect x="271" y="493.67" width="629" height="1.3" fill="#808080"/><rect x="271" y="503.35" width="629" height="1.3" fill="#808080"/><rect x="271" y="513.04" width="629" height="1.3" fill="#808080"/><rect x="271" y="522.72" width="629" height="1.3" fill="#808080"/><rect x="271" y="532.40" width="629" height="1.3" fill="#808080"/><rect x="271" y="542.09" width="629" height="1.3" fill="#808080"/><rect x="271" y="551.77" width="629" height="1.3" fill="#808080"/><rect x="271" y="561.45" width="629" height="1.3" fill="#808080"/><rect x="271" y="571.13" width="629" height="1.3" fill="#808080"/><rect x="271" y="580.82" width="629" height="1.3" fill="#808080"/><rect x="271" y="590.50" width="629" height="1.3" fill="#808080"/><rect x="271" y="600.18" width="629" height="1.3" fill="#808080"/><rect x="271" y="609.87" width="629" height="1.3" fill="#808080"/></svg>
<svg style="left:484px;top:117px;overflow:hidden" width="281" height="100" viewBox="0 0 281 100">
<defs>
<filter id="bl" x="-50%" y="-50%" width="200%" height="200%"><feGaussianBlur stdDeviation="10"/></filter>
<filter id="bl2"><feGaussianBlur stdDeviation="0.7"/></filter>
<linearGradient id="pg" x1="0" y1="0" x2="0" y2="1"><stop offset="0" stop-color="#2c3326"/><stop offset=".3" stop-color="#3b4229"/><stop offset="1" stop-color="#3a4a26"/></linearGradient>
</defs>
<rect width="281" height="100" fill="url(#pg)"/>
<g filter="url(#bl)">
<ellipse cx="55" cy="48" rx="65" ry="22" fill="#5c5832"/>
<ellipse cx="25" cy="90" rx="50" ry="18" fill="#35562a"/>
<ellipse cx="120" cy="70" rx="40" ry="25" fill="#3e5226"/>
<ellipse cx="245" cy="8" rx="45" ry="16" fill="#8b8a9b"/>
<ellipse cx="205" cy="55" rx="35" ry="28" fill="#4d5432"/>
<ellipse cx="262" cy="72" rx="24" ry="26" fill="#5b5640"/>
<ellipse cx="140" cy="8" rx="60" ry="10" fill="#2a3025"/>
</g>
<g filter="url(#bl2)">
<path d="M83 52 Q98 40 116 38 Q132 37 145 48 L146 74 Q132 80 118 74 Q98 64 83 52 Z" fill="#f1d431"/>
<path d="M128 62 Q124 35 134 18 L137 14 Q146 20 151 24 Q160 36 161 44 Q160 58 154 66 Z" fill="#f4da36"/>
<path d="M150 50 Q162 40 176 41 Q186 45 191 51 Q186 65 178 80 L152 78 Z" fill="#f0d12e"/>
<path d="M165 72 Q182 72 196 82 L166 84 Z" fill="#e8c82a"/>
<path d="M137 16 Q143 35 141 60" stroke="#e2c01e" stroke-width="1.2" fill="none"/>
<ellipse cx="136" cy="82" rx="24" ry="11" fill="#e1b41a"/>
<ellipse cx="142" cy="70" rx="12" ry="8" fill="#ecc828"/>
</g>
</svg>
<div class="a" style="left:667px;top:117px;width:2px;height:78px;background:repeating-linear-gradient(#f4f4f4 0 3px,#111 3px 6px)"></div>
<div class="a" style="left:289px;top:115px;width:179px;height:178px;background:#b1001c;border:2px solid #fbe9a0"></div>
<svg style="left:280px;top:105px" width="200" height="200"><circle cx="9.5" cy="11" r="3.5" fill="#d40f1f"/><circle cx="186" cy="11" r="3.5" fill="#d40f1f"/><circle cx="9.5" cy="187" r="3.5" fill="#d40f1f"/><rect x="93.5" y="7" width="7.5" height="7.5" fill="#d40f1f" stroke="#fff" stroke-width=".8"/><circle cx="97.3" cy="21" r="3.4" fill="none" stroke="#fff" stroke-width="1.1"/><rect x="6" y="95" width="7" height="7" fill="#d40f1f" stroke="#fff" stroke-width=".5"/><circle cx="32.5" cy="11" r="6" fill="#d40f1f" stroke="#fff" stroke-width="1.2"/><path d="M32.5 6.3l2.2 2.4h-4.4zM32.5 15.7l2.2-2.4h-4.4zM27.8 11l2.4-2.2v4.4zM37.2 11l-2.4-2.2v4.4z" fill="#fff"/><circle cx="32.5" cy="11" r="1" fill="#fff"/></svg>
<svg style="left:734px;top:662px" width="90" height="11"><rect x="1" y="2" width="6" height="7" fill="none" stroke="#999" stroke-width="1"/><path d="M18 7L24 11H18Z" fill="#666"/><rect x="39" y="9" width="8" height="3" fill="#666"/><path d="M50 2Q56 1 56 7" stroke="#333" stroke-width="1.6" fill="none"/><path d="M48 2L52 -1V5Z" fill="#333"/><path d="M53 7H59L56 11Z" fill="#333"/><rect x="61.5" y="2.5" width="20" height="12" rx="2" fill="#cdcdcd" stroke="#b0b0b0"/><rect x="65" y="7" width="13" height="3" fill="#666"/></svg>
<div class="a" style="left:316px;top:195px;width:558px;height:413px;background:#fff;box-shadow:1px 1px 5px rgba(0,0,0,.3);border:1px solid #d0d0d0"></div>
<svg style="left:322px;top:200px" width="12" height="12" viewBox="0 0 12 12"><path d="M0 8H12V11.5H0Z" fill="#c40d15"/><rect x="1" y="5" width="10" height="3" fill="#8ec7d9"/><circle cx="6" cy="3.5" r="2.2" fill="#d9824a"/><path d="M3.5 8Q6 3 8.5 8" fill="#3f8d5c"/></svg>
<div class="t" style="left:337px;transform-origin:0 0;top:202.20px;font-size:8.5px;color:#9a9a9a;font-weight:normal;transform:scaleX(0.967);">Clipart anpassen</div>
<div class="t" style="left:823.5px;transform-origin:0 0;top:201.46px;font-size:9.5px;color:#888;font-weight:normal;">?</div>
<svg style="left:853px;top:201px" width="10" height="10"><path d="M1 1L9 9M9 1L1 9" stroke="#777" stroke-width="1.1"/></svg>
<div class="a" style="left:324px;top:230px;width:341px;height:380px;border:1px solid #dcdcdc;border-radius:3px"></div>
<div class="a" style="left:330px;top:223px;width:30px;height:12px;background:#fff"></div>
<div class="t" style="left:331.7px;transform-origin:0 0;top:225.89px;font-size:8.4px;color:#111;font-weight:bold;transform:scaleX(0.913);-webkit-text-stroke:0.2px #111;">Clipart</div>
<div class="a" style="left:331px;top:237px;width:328px;height:100px;background:#b1001c"></div>
<div class="a" style="left:670px;top:230px;width:196px;height:247px;border:1px solid #dcdcdc;border-radius:3px"></div>
<div class="a" style="left:676px;top:223px;width:60px;height:12px;background:#fff"></div>
<div class="t" style="left:678.3px;transform-origin:0 0;top:225.79px;font-size:8.4px;color:#111;font-weight:bold;transform:scaleX(0.920);-webkit-text-stroke:0.2px #111;">Farben ändern</div>
<div class="a" style="left:677px;top:237px;width:183px;height:215px;border:1px solid #a8a8b0;background:#fff"></div>
<div class="a" style="left:680px;top:238px;width:171px;height:19px;background:#bcdcf3"></div>
<div class="t" style="left:689.3px;transform-origin:0 0;top:243.27px;font-size:9.6px;color:#111;font-weight:bold;-webkit-text-stroke:0.2px #111;">Vorher</div>
<div class="t" style="left:744px;transform-origin:0 0;top:243.07px;font-size:9.6px;color:#111;font-weight:bold;transform:scaleX(1.015);-webkit-text-stroke:0.2px #111;">Jetzt</div>
<div class="a" style="left:678px;top:257px;width:173px;height:21px;background:#efefef"></div>
<div class="a" style="left:680px;top:257px;width:49px;height:21px;background:#fde9cb;border:2px solid #1b9cf0"></div>
<div class="a" style="left:731px;top:257px;width:48px;height:21px;background:#b1001c;border:2px solid #1b9cf0"></div>
<svg style="left:782px;top:259px" width="24" height="17"><path d="M2 6L8 1V4Q18 3 23 16Q17 8 8 9V12Z" fill="#a9cbe9" stroke="#3d7fbf" stroke-width="1"/></svg>
<div class="t" style="right:156.29999999999995px;transform-origin:100% 0;top:458.91px;font-size:10.5px;color:#aaa;font-weight:normal;transform:scaleX(0.930);">Beschriftung</div>
<div class="a" style="left:670px;top:488px;width:196px;height:46px;border:1px solid #dcdcdc;border-radius:3px"></div>
<div class="t" style="left:733.6px;transform-origin:0 0;top:497.51px;font-size:10.5px;color:#111;font-weight:normal;transform:scaleX(0.945);-webkit-text-stroke:0.2px #111;">-Achse (links &lt;=&gt; rechts)</div>
<div class="t" style="left:733.6px;transform-origin:0 0;top:515.71px;font-size:10.5px;color:#111;font-weight:normal;transform:scaleX(0.965);-webkit-text-stroke:0.2px #111;">-Achse (oben &lt;=&gt; unten)</div>
<div class="a" style="left:670px;top:543px;width:196px;height:28px;border:1px solid #dcdcdc;border-radius:3px"></div>
<div class="t" style="right:63.5px;transform-origin:100% 0;top:553.11px;font-size:10.5px;color:#111;font-weight:normal;transform:scaleX(0.920);-webkit-text-stroke:0.2px #111;">In "Meine Cliparts" speichern</div>
<div class="a" style="left:757px;top:577px;width:31px;height:23px;background:#4b4b4b;border-radius:3px"></div>
<div class="t" style="left:765.7px;transform-origin:0 0;top:583.70px;font-size:9.8px;color:#fff;font-weight:normal;transform:scaleX(0.939);-webkit-text-stroke:0.2px #fff;">OK</div>
<div class="a" style="left:798px;top:577px;width:65px;height:23px;background:#4b4b4b;border-radius:3px"></div>
<div class="t" style="left:807.5px;transform-origin:0 0;top:583.70px;font-size:9.8px;color:#fff;font-weight:normal;transform:scaleX(0.977);-webkit-text-stroke:0.2px #fff;">Abbrechen</div>
<div class="a" style="left:316px;top:331px;width:417px;height:341px;background:#fff;border:1px solid #5b9ee0;box-shadow:2px 3px 12px rgba(0,0,0,.28)"></div>
<svg style="left:323px;top:336px" width="12" height="12" viewBox="0 0 12 12"><path d="M0 8H12V11.5H0Z" fill="#c40d15"/><rect x="1" y="5" width="10" height="3" fill="#8ec7d9"/><circle cx="6" cy="3.5" r="2.2" fill="#d9824a"/><path d="M3.5 8Q6 3 8.5 8" fill="#3f8d5c"/></svg>
<div class="t" style="left:338.4px;transform-origin:0 0;top:338.76px;font-size:8.2px;color:#111;font-weight:normal;-webkit-text-stroke:0.2px #111;">Farbauswahl</div>
<svg style="left:717px;top:337px" width="10" height="10"><path d="M1 1L9 9M9 1L1 9" stroke="#111" stroke-width="1.2"/></svg>
<div class="t" style="left:325.5px;transform-origin:0 0;top:362.81px;font-size:10.5px;color:#222;font-weight:normal;transform:scaleX(0.945);-webkit-text-stroke:0.2px #222;">Grundfarben</div>
<div class="a" style="left:327.5px;top:381px;width:16px;height:13px;background:rgb(0, 0, 0);border:1px solid #9c9c9c"></div>
<div class="a" style="left:327.5px;top:398px;width:16px;height:13px;background:rgb(0, 0, 127);border:1px solid #9c9c9c"></div>
<div class="a" style="left:327.5px;top:415px;width:16px;height:13px;background:rgb(0, 0, 255);border:1px solid #9c9c9c"></div>
<div class="a" style="left:327.5px;top:432px;width:16px;height:13px;background:rgb(85, 0, 0);border:1px solid #9c9c9c"></div>
<div class="a" style="left:327.5px;top:449px;width:16px;height:13px;background:rgb(85, 0, 127);border:1px solid #9c9c9c"></div>
<div class="a" style="left:327.5px;top:466px;width:16px;height:13px;background:rgb(85, 0, 255);border:1px solid #9c9c9c"></div>
<div class="a" style="left:347.4px;top:381px;width:16px;height:13px;background:rgb(170, 0, 0);border:1px solid #9c9c9c"></div>
<div class="a" style="left:347.4px;top:398px;width:16px;height:13px;background:rgb(170, 0, 127);border:1px solid #9c9c9c"></div>
<div class="a" style="left:347.4px;top:415px;width:16px;height:13px;background:rgb(170, 0, 255);border:1px solid #9c9c9c"></div>
<div class="a" style="left:347.4px;top:432px;width:16px;height:13px;background:rgb(255, 0, 0);border:1px solid #9c9c9c"></div>
<div class="a" style="left:347.4px;top:449px;width:16px;height:13px;background:rgb(255, 0, 127);border:1px solid #9c9c9c"></div>
<div class="a" style="left:347.4px;top:466px;width:16px;height:13px;background:rgb(255, 0, 255);border:1px solid #9c9c9c"></div>
<div class="a" style="left:367.3px;top:381px;width:16px;height:13px;background:rgb(0, 85, 0);border:1px solid #9c9c9c"></div>
<div class="a" style="left:367.3px;top:398px;width:16px;height:13px;background:rgb(0, 85, 127);border:1px solid #9c9c9c"></div>
<div class="a" style="left:367.3px;top:415px;width:16px;height:13px;background:rgb(0, 85, 255);border:1px solid #9c9c9c"></div>
<div class="a" style="left:367.3px;top:432px;width:16px;height:13px;background:rgb(85, 85, 0);border:1px solid #9c9c9c"></div>
<div class="a" style="left:367.3px;top:449px;width:16px;height:13px;background:rgb(85, 85, 127);border:1px solid #9c9c9c"></div>
<div class="a" style="left:367.3px;top:466px;width:16px;height:13px;background:rgb(85, 85, 255);border:1px solid #9c9c9c"></div>
<div class="a" style="left:387.2px;top:381px;width:16px;height:13px;background:rgb(170, 85, 0);border:1px solid #9c9c9c"></div>
<div class="a" style="left:387.2px;top:398px;width:16px;height:13px;background:rgb(170, 85, 127);border:1px solid #9c9c9c"></div>
<div class="a" style="left:387.2px;top:415px;width:16px;height:13px;background:rgb(170, 85, 255);border:1px solid #9c9c9c"></div>
<div class="a" style="left:387.2px;top:432px;width:16px;height:13px;background:rgb(255, 85, 0);border:1px solid #9c9c9c"></div>
<div class="a" style="left:387.2px;top:449px;width:16px;height:13px;background:rgb(255, 85, 127);border:1px solid #9c9c9c"></div>
<div class="a" style="left:387.2px;top:466px;width:16px;height:13px;background:rgb(255, 85, 255);border:1px solid #9c9c9c"></div>
<div class="a" style="left:407.1px;top:381px;width:16px;height:13px;background:rgb(0, 170, 0);border:1px solid #9c9c9c"></div>
<div class="a" style="left:407.1px;top:398px;width:16px;height:13px;background:rgb(0, 170, 127);border:1px solid #9c9c9c"></div>
<div class="a" style="left:407.1px;top:415px;width:16px;height:13px;background:rgb(0, 170, 255);border:1px solid #9c9c9c"></div>
<div class="a" style="left:407.1px;top:432px;width:16px;height:13px;background:rgb(85, 170, 0);border:1px solid #9c9c9c"></div>
<div class="a" style="left:407.1px;top:449px;width:16px;height:13px;background:rgb(85, 170, 127);border:1px solid #9c9c9c"></div>
<div class="a" style="left:407.1px;top:466px;width:16px;height:13px;background:rgb(85, 170, 255);border:1px solid #9c9c9c"></div>
<div class="a" style="left:427.0px;top:381px;width:16px;height:13px;background:rgb(170, 170, 0);border:1px solid #9c9c9c"></div>
<div class="a" style="left:427.0px;top:398px;width:16px;height:13px;background:rgb(170, 170, 127);border:1px solid #9c9c9c"></div>
<div class="a" style="left:427.0px;top:415px;width:16px;height:13px;background:rgb(170, 170, 255);border:1px solid #9c9c9c"></div>
<div class="a" style="left:427.0px;top:432px;width:16px;height:13px;background:rgb(255, 170, 0);border:1px solid #9c9c9c"></div>
<div class="a" style="left:427.0px;top:449px;width:16px;height:13px;background:rgb(255, 170, 127);border:1px solid #9c9c9c"></div>
<div class="a" style="left:427.0px;top:466px;width:16px;height:13px;background:rgb(255, 170, 255);border:1px solid #9c9c9c"></div>
<div class="a" style="left:446.9px;top:381px;width:16px;height:13px;background:rgb(0, 255, 0);border:1px solid #9c9c9c"></div>
<div class="a" style="left:446.9px;top:398px;width:16px;height:13px;background:rgb(0, 255, 127);border:1px solid #9c9c9c"></div>
<div class="a" style="left:446.9px;top:415px;width:16px;height:13px;background:rgb(0, 255, 255);border:1px solid #9c9c9c"></div>
<div class="a" style="left:446.9px;top:432px;width:16px;height:13px;background:rgb(85, 255, 0);border:1px solid #9c9c9c"></div>
<div class="a" style="left:446.9px;top:449px;width:16px;height:13px;background:rgb(85, 255, 127);border:1px solid #9c9c9c"></div>
<div class="a" style="left:446.9px;top:466px;width:16px;height:13px;background:rgb(85, 255, 255);border:1px solid #9c9c9c"></div>
<div class="a" style="left:466.8px;top:381px;width:16px;height:13px;background:rgb(170, 255, 0);border:1px solid #9c9c9c"></div>
<div class="a" style="left:466.8px;top:398px;width:16px;height:13px;background:rgb(170, 255, 127);border:1px solid #9c9c9c"></div>
<div class="a" style="left:466.8px;top:415px;width:16px;height:13px;background:rgb(170, 255, 255);border:1px solid #9c9c9c"></div>
<div class="a" style="left:466.8px;top:432px;width:16px;height:13px;background:rgb(255, 255, 0);border:1px solid #9c9c9c"></div>
<div class="a" style="left:466.8px;top:449px;width:16px;height:13px;background:rgb(255, 255, 127);border:1px solid #9c9c9c"></div>
<div class="a" style="left:466.8px;top:466px;width:16px;height:13px;background:rgb(255, 255, 255);border:1px solid #9c9c9c"></div>
<div class="a" style="left:465px;top:464px;width:20px;height:17px;border:1px dashed #777"></div>
<div class="a" style="left:523px;top:368px;width:157px;height:142px;background:linear-gradient(rgba(200,200,200,0),#c8c8c8),linear-gradient(90deg,#c80000,#c800c8 16.67%,#0000c8 33.33%,#00c8c8 50%,#00c800 66.67%,#c8c800 83.33%,#c80000)"></div>
<svg style="left:521px;top:366px" width="12" height="12"><path d="M0 2H11M3 0V10" stroke="#111" stroke-width="1.5"/></svg>
<div class="a" style="left:692px;top:368px;width:10px;height:142px;background:linear-gradient(#ff002a,#000)"></div>
<svg style="left:702px;top:407px" width="5" height="8"><path d="M5 0V8L0 4Z" fill="#111"/></svg>
<div class="a" style="left:326px;top:486px;width:188px;height:18px;background:#e1e1e1;border:1px solid #adadad"></div>
<div class="t" style="left:356px;transform-origin:0 0;top:490.71px;font-size:10.5px;color:#111;font-weight:normal;transform:scaleX(0.919);-webkit-text-stroke:0.2px #111;">Farbe vom Bildschirm wählen</div>
<div class="t" style="left:325.5px;transform-origin:0 0;top:557.61px;font-size:10.5px;color:#222;font-weight:normal;transform:scaleX(0.917);-webkit-text-stroke:0.2px #222;">Benutzerdefinierte Farben</div>
<div class="a" style="left:327px;top:575px;width:16px;height:14px;background:#f7f4ee;border:1px solid #a0a0a0"></div>
<div class="a" style="left:347px;top:575px;width:16px;height:14px;background:#6b2c07;border:1px solid #a0a0a0"></div>
<div class="a" style="left:367px;top:575px;width:16px;height:14px;background:#6e6e6e;border:1px solid #a0a0a0"></div>
<div class="a" style="left:387px;top:575px;width:16px;height:14px;background:#8e8e8e;border:1px solid #a0a0a0"></div>
<div class="a" style="left:407px;top:575px;width:16px;height:14px;background:#575757;border:1px solid #a0a0a0"></div>
<div class="a" style="left:427px;top:575px;width:16px;height:14px;background:#b2b2b2;border:1px solid #a0a0a0"></div>
<div class="a" style="left:447px;top:575px;width:16px;height:14px;background:#f8f8f6;border:1px solid #a0a0a0"></div>
<div class="a" style="left:467px;top:575px;width:16px;height:14px;background:#e2e0db;border:1px solid #a0a0a0"></div>
<div class="a" style="left:327px;top:592px;width:16px;height:14px;background:#eee4b3;border:1px solid #a0a0a0"></div>
<div class="a" style="left:347px;top:592px;width:16px;height:14px;background:#6f747c;border:1px solid #a0a0a0"></div>
<div class="a" style="left:367px;top:592px;width:16px;height:14px;background:#fdf6dd;border:1px solid #a0a0a0"></div>
<div class="a" style="left:387px;top:592px;width:16px;height:14px;background:#d7d7d7;border:1px solid #a0a0a0"></div>
<div class="a" style="left:407px;top:592px;width:16px;height:14px;background:#b01b24;border:1px solid #a0a0a0"></div>
<div class="a" style="left:427px;top:592px;width:16px;height:14px;background:#f7c26b;border:1px solid #a0a0a0"></div>
<div class="a" style="left:447px;top:592px;width:16px;height:14px;background:#2e3c5a;border:1px solid #a0a0a0"></div>
<div class="a" style="left:467px;top:592px;width:16px;height:14px;background:#f2f1ec;border:1px solid #a0a0a0"></div>
<div class="a" style="left:326px;top:612px;width:188px;height:18px;background:#e1e1e1;border:1px solid #adadad"></div>
<div class="t" style="left:327.8px;transform-origin:0 0;top:616.61px;font-size:10.5px;color:#111;font-weight:normal;transform:scaleX(0.936);-webkit-text-stroke:0.2px #111;">Zu benutzerdefinierten Farben hinzufügen</div>
<div class="a" style="left:523px;top:527px;width:42px;height:103px;background:#b1001c"></div>
<div class="a" style="left:618px;top:527px;width:35px;height:16px;border:1px solid #e2e2e2;background:#fff"></div>
<div class="t" style="left:620.2px;transform-origin:0 0;top:529.61px;font-size:10.5px;color:#111;font-weight:normal;transform:scaleX(0.940);-webkit-text-stroke:0.2px #111;">350</div>
<svg style="left:644px;top:529px" width="7" height="12"><path d="M0.5 4.5L3.5 1L6.5 4.5Z" fill="#9a9a9a"/><path d="M0.5 7.5L3.5 11L6.5 7.5Z" fill="#9a9a9a"/></svg>
<div class="a" style="left:642px;top:528px;width:1px;height:14px;background:#f0f0f0"></div>
<div class="a" style="left:686px;top:527px;width:35px;height:16px;border:1px solid #e2e2e2;background:#fff"></div>
<div class="t" style="left:688.2px;transform-origin:0 0;top:529.61px;font-size:10.5px;color:#111;font-weight:normal;transform:scaleX(0.940);-webkit-text-stroke:0.2px #111;">177</div>
<svg style="left:712px;top:529px" width="7" height="12"><path d="M0.5 4.5L3.5 1L6.5 4.5Z" fill="#9a9a9a"/><path d="M0.5 7.5L3.5 11L6.5 7.5Z" fill="#9a9a9a"/></svg>
<div class="a" style="left:710px;top:528px;width:1px;height:14px;background:#f0f0f0"></div>
<div class="a" style="left:618px;top:547.4px;width:35px;height:16px;border:1px solid #e2e2e2;background:#fff"></div>
<div class="t" style="left:620.2px;transform-origin:0 0;top:550.01px;font-size:10.5px;color:#111;font-weight:normal;transform:scaleX(0.940);-webkit-text-stroke:0.2px #111;">255</div>
<svg style="left:644px;top:549.4px" width="7" height="12"><path d="M0.5 4.5L3.5 1L6.5 4.5Z" fill="#9a9a9a"/><path d="M0.5 7.5L3.5 11L6.5 7.5Z" fill="#9a9a9a"/></svg>
<div class="a" style="left:642px;top:548.4px;width:1px;height:14px;background:#f0f0f0"></div>
<div class="a" style="left:686px;top:547.4px;width:35px;height:16px;border:1px solid #e2e2e2;background:#fff"></div>
<div class="t" style="left:688.2px;transform-origin:0 0;top:550.01px;font-size:10.5px;color:#111;font-weight:normal;transform:scaleX(0.940);-webkit-text-stroke:0.2px #111;">0</div>
<svg style="left:712px;top:549.4px" width="7" height="12"><path d="M0.5 4.5L3.5 1L6.5 4.5Z" fill="#9a9a9a"/><path d="M0.5 7.5L3.5 11L6.5 7.5Z" fill="#9a9a9a"/></svg>
<div class="a" style="left:710px;top:548.4px;width:1px;height:14px;background:#f0f0f0"></div>
<div class="a" style="left:618px;top:568.4px;width:35px;height:16px;border:1px solid #e2e2e2;background:#fff"></div>
<div class="t" style="left:620.2px;transform-origin:0 0;top:571.01px;font-size:10.5px;color:#111;font-weight:normal;transform:scaleX(0.940);-webkit-text-stroke:0.2px #111;">177</div>
<svg style="left:644px;top:570.4px" width="7" height="12"><path d="M0.5 4.5L3.5 1L6.5 4.5Z" fill="#9a9a9a"/><path d="M0.5 7.5L3.5 11L6.5 7.5Z" fill="#9a9a9a"/></svg>
<div class="a" style="left:642px;top:569.4px;width:1px;height:14px;background:#f0f0f0"></div>
<div class="a" style="left:686px;top:568.4px;width:35px;height:16px;border:1px solid #e2e2e2;background:#fff"></div>
<div class="t" style="left:688.2px;transform-origin:0 0;top:571.01px;font-size:10.5px;color:#111;font-weight:normal;transform:scaleX(0.940);-webkit-text-stroke:0.2px #111;">28</div>
<svg style="left:712px;top:570.4px" width="7" height="12"><path d="M0.5 4.5L3.5 1L6.5 4.5Z" fill="#9a9a9a"/><path d="M0.5 7.5L3.5 11L6.5 7.5Z" fill="#9a9a9a"/></svg>
<div class="a" style="left:710px;top:569.4px;width:1px;height:14px;background:#f0f0f0"></div>
<div class="a" style="left:686px;top:589.2px;width:35px;height:16px;border:1px solid #e2e2e2;background:#fff"></div>
<div class="t" style="left:688.2px;transform-origin:0 0;top:591.81px;font-size:10.5px;color:#111;font-weight:normal;transform:scaleX(0.940);-webkit-text-stroke:0.2px #111;">255</div>
<svg style="left:712px;top:591.2px" width="7" height="12"><path d="M0.5 4.5L3.5 1L6.5 4.5Z" fill="#9a9a9a"/><path d="M0.5 7.5L3.5 11L6.5 7.5Z" fill="#9a9a9a"/></svg>
<div class="a" style="left:710px;top:590.2px;width:1px;height:14px;background:#f0f0f0"></div>
<div class="t" style="right:286px;transform-origin:100% 0;top:529.61px;font-size:10.5px;color:#111;font-weight:normal;transform:scaleX(0.920);-webkit-text-stroke:0.2px #111;">Farbton:</div>
<div class="t" style="right:218.29999999999995px;transform-origin:100% 0;top:529.61px;font-size:10.5px;color:#111;font-weight:normal;transform:scaleX(0.920);-webkit-text-stroke:0.2px #111;">Rot:</div>
<div class="t" style="right:286px;transform-origin:100% 0;top:550.01px;font-size:10.5px;color:#111;font-weight:normal;transform:scaleX(0.920);-webkit-text-stroke:0.2px #111;">Sättigung:</div>
<div class="t" style="right:218.29999999999995px;transform-origin:100% 0;top:550.01px;font-size:10.5px;color:#111;font-weight:normal;transform:scaleX(0.920);-webkit-text-stroke:0.2px #111;">Grün:</div>
<div class="t" style="right:286px;transform-origin:100% 0;top:571.01px;font-size:10.5px;color:#111;font-weight:normal;transform:scaleX(0.920);-webkit-text-stroke:0.2px #111;">Helligkeit:</div>
<div class="t" style="right:218.29999999999995px;transform-origin:100% 0;top:571.01px;font-size:10.5px;color:#111;font-weight:normal;transform:scaleX(0.920);-webkit-text-stroke:0.2px #111;">Blau:</div>
<div class="t" style="right:218.29999999999995px;transform-origin:100% 0;top:591.81px;font-size:10.5px;color:#111;font-weight:normal;transform:scaleX(0.920);-webkit-text-stroke:0.2px #111;">Alphakanal:</div>
<div class="t" style="right:286px;transform-origin:100% 0;top:617.11px;font-size:10.5px;color:#111;font-weight:normal;transform:scaleX(0.920);-webkit-text-stroke:0.2px #111;">HTML:</div>
<div class="a" style="left:618px;top:613px;width:95px;height:18px;border:1px solid #adadad;background:#fff"></div>
<div class="t" style="left:620.8px;transform-origin:0 0;top:617.11px;font-size:10.5px;color:#111;font-weight:normal;transform:scaleX(0.943);-webkit-text-stroke:0.2px #111;">#b1001c</div>
<div class="a" style="left:615px;top:640px;width:31px;height:23px;background:#4b4b4b;border-radius:3px"></div>
<div class="t" style="left:623.3px;transform-origin:0 0;top:646.70px;font-size:9.8px;color:#fff;font-weight:normal;transform:scaleX(0.989);-webkit-text-stroke:0.2px #fff;">OK</div>
<div class="a" style="left:657px;top:640px;width:65px;height:23px;background:#4b4b4b;border-radius:3px"></div>
<div class="t" style="left:665.8px;transform-origin:0 0;top:646.70px;font-size:9.8px;color:#fff;font-weight:normal;transform:scaleX(0.985);-webkit-text-stroke:0.2px #fff;">Abbrechen</div>
<div class="a" style="left:499px;top:28px;width:40px;height:44px;border:5px solid #a8001c;border-radius:4px"></div>
<div class="a" style="left:669px;top:246px;width:72px;height:43px;border:5px solid #a8001c;border-radius:4px"></div>
<div class="a" style="left:314px;top:476px;width:210px;height:41px;border:4px solid #a8001c;border-radius:4px"></div>
<div class="a" style="left:604px;top:628px;width:53px;height:52px;border:5px solid #a8001c;border-radius:4px"></div>
</body></html>
